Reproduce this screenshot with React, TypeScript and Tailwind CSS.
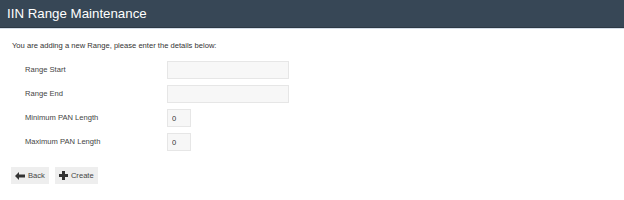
export default function App() {
  const fields = [
    { label: "Range Start", value: "", wide: true },
    { label: "Range End", value: "", wide: true },
    { label: "Minimum PAN Length", value: "0", wide: false },
    { label: "Maximum PAN Length", value: "0", wide: false },
  ];

  return (
    <div className="w-[624px] h-[200px] bg-white font-['Liberation_Sans',Arial,sans-serif] text-[#333]">
      {/* Header */}
      <div className="h-[28px] bg-[#374756] border-b border-[#2c3844] flex items-center px-[7px]">
        <h1 className="text-white text-[13.3px] leading-none">IIN Range Maintenance</h1>
      </div>
      <div className="h-px bg-[#d3dde8]" />

      <div className="px-[12px] pt-[12px]">
        <p className="text-[7.6px] leading-[10px] text-[#333]">
          You are adding a new Range, please enter the details below:
        </p>

        <div className="mt-[10px] flex flex-col gap-[6px]">
          {fields.map((f) => (
            <div key={f.label} className="flex items-center pl-[13px]">
              <label className="w-[142px] text-[7.6px] text-[#444]">{f.label}</label>
              <input
                readOnly
                value={f.value}
                className={`${f.wide ? "w-[122px]" : "w-[24px]"} h-[18px] bg-[#f7f7f7] border border-[#e6e6e6] px-[4px] text-[7.6px] text-[#333] outline-none`}
              />
            </div>
          ))}
        </div>

        <div className="mt-[16px] flex gap-[6px] -ml-px">
          <button className="h-[17px] px-[4px] bg-[#eeeeee] flex items-center gap-[3px] text-[7.6px] text-[#444]">
            <svg width="10" height="8" viewBox="0 0 10 8">
              <path d="M0 4 L4 0 V2.5 H10 V5.5 H4 V8 Z" fill="#333" />
            </svg>
            Back
          </button>
          <button className="h-[17px] px-[4px] bg-[#eeeeee] flex items-center gap-[3px] text-[7.6px] text-[#444]">
            <svg width="9" height="9" viewBox="0 0 9 9">
              <path d="M3 0 H6 V3 H9 V6 H6 V9 H3 V6 H0 V3 H3 Z" fill="#333" />
            </svg>
            Create
          </button>
        </div>
      </div>
    </div>
  );
}
